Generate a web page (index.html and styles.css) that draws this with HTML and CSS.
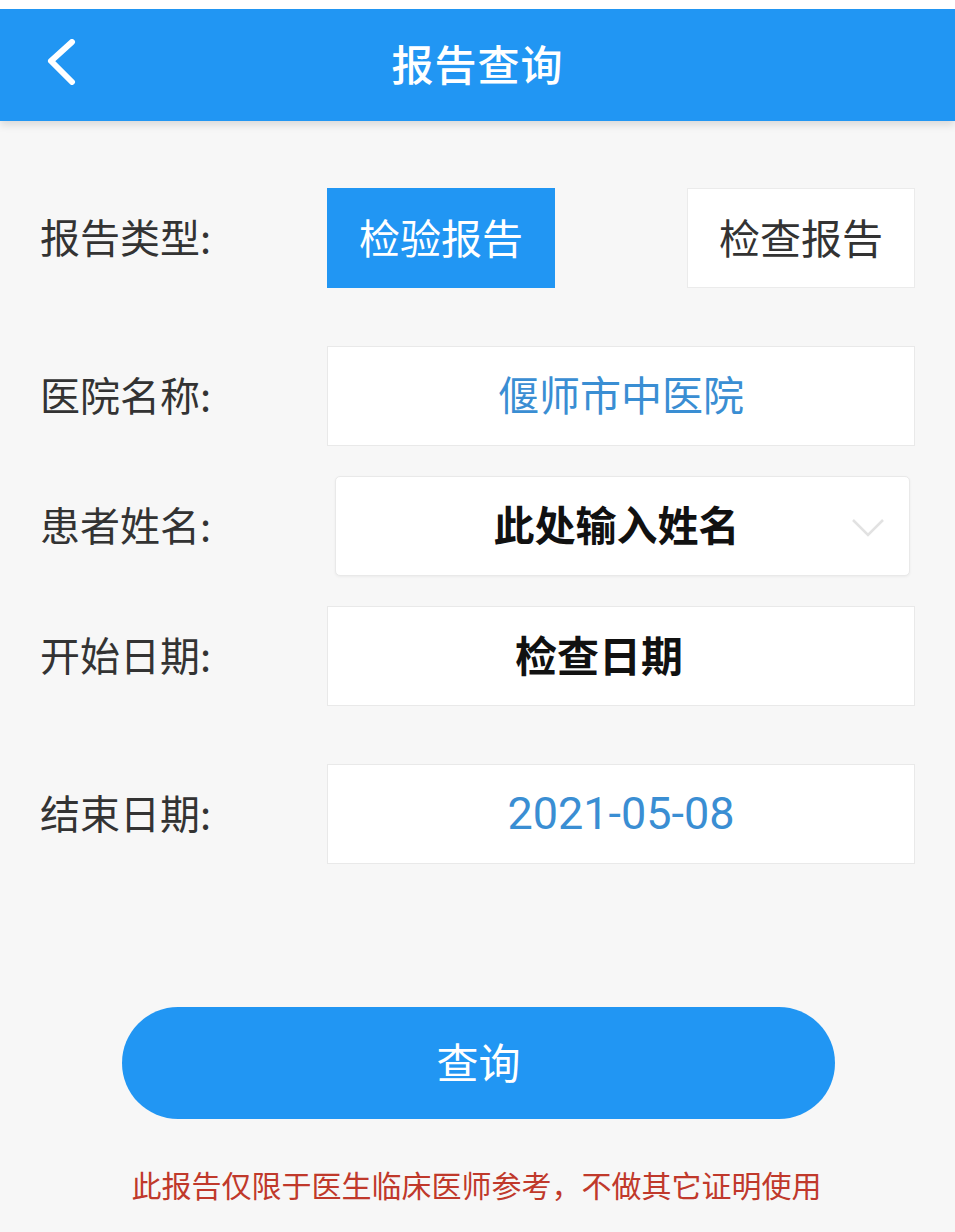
FILE: index.html
```html
<!DOCTYPE html>
<html lang="zh-CN">
<head>
	<meta charset="UTF-8">
	<title>报告查询</title>
	<link rel="stylesheet" href="styles.css">
</head>
<body>
	<div class="topbar">
		<a class="back" href="#">
			<svg width="34" height="46" viewBox="0 0 34 46"><polyline points="28,3 7,22 28,43" fill="none" stroke="#fff" stroke-width="6" stroke-linecap="round" stroke-linejoin="round"/></svg>
		</a>
		<h1>报告查询</h1>
	</div>

	<div class="form">
		<div class="row row-type">
			<span class="label">报告类型:</span>
			<div class="tabs">
				<span class="tab on">检验报告</span>
				<span class="tab">检查报告</span>
			</div>
		</div>
		<div class="row row-hosp">
			<span class="label">医院名称:</span>
			<div class="box blue">偃师市中医院</div>
		</div>
		<div class="row row-name">
			<span class="label">患者姓名:</span>
			<div class="box select bold">
				此处输入姓名
				<svg class="arrow" width="34" height="22" viewBox="0 0 34 22"><polyline points="2,3 17,18 32,3" fill="none" stroke="#e2e2e2" stroke-width="2.5"/></svg>
			</div>
		</div>
		<div class="row row-start">
			<span class="label">开始日期:</span>
			<div class="box bold shift">检查日期</div>
		</div>
		<div class="row row-end">
			<span class="label">结束日期:</span>
			<div class="box blue num">2021-05-08</div>
		</div>
	</div>

	<div class="btn-wrap">
		<a class="btn" href="#">查询</a>
	</div>
	<p class="tip">此报告仅限于医生临床医师参考，不做其它证明使用</p>
</body>
</html>
```

FILE: styles.css
```css
*{margin:0;padding:0;box-sizing:border-box;}
body{
	background: #f7f7f7;
	font-family: "Noto Sans CJK SC", "Liberation Sans", sans-serif;
	color: #333;
	border-top: 9px solid #fff;
	height: 1232px;
	overflow: hidden;
}
.topbar{
	height: 112px;
	background: #2196f3;
	display: flex;
	align-items: center;
	justify-content: center;
	position: relative;
	box-shadow: 0 4px 8px rgba(0,0,0,0.12);
}
.back{
	position: absolute;
	left: 44px;
	top: 30px;
	display: block;
}
.topbar h1{
	color: #fff;
	font-size: 42px;
	font-weight: 500;
	letter-spacing: 1px;
	margin-top: -6px;
}
.form{
	padding: 0 40px;
	margin-top: 67px;
}
.row{
	display: flex;
	align-items: center;
	height: 100px;
}
.label{
	width: 287px;
	font-size: 40px;
	line-height: 1;
	color: #333;
	flex-shrink: 0;
	margin-top: -4px;
}
.row-hosp{margin-top: 58px;}
.row-name{margin-top: 30px;}
.row-start{margin-top: 30px;}
.row-end{margin-top: 58px;}

.tabs{
	flex: 1;
	display: flex;
	justify-content: space-between;
	height: 100%;
}
.tab{
	width: 228px;
	height: 100px;
	display: flex;
	align-items: center;
	justify-content: center;
	font-size: 41px;
	background: #fff;
	border: 1px solid #ebebeb;
	color: #333;
	padding-bottom: 4px;
}
.tab.on{
	background: #2196f3;
	border-color: #2196f3;
	color: #fff;
}
.box{
	flex: 1;
	height: 100px;
	background: #fff;
	border: 1px solid #e9e9e9;
	display: flex;
	align-items: center;
	justify-content: center;
	font-size: 41px;
	position: relative;
	padding-bottom: 6px;
}
.blue{color: #3a8ed3;}
.num{
	font-family: Roboto, "Liberation Sans", sans-serif;
	font-size: 45px;
	padding-bottom: 2px;
}
.bold{
	font-weight: 700;
	color: #111;
}
.select{
	margin-left: 8px;
	margin-right: 5px;
	border-radius: 5px;
	padding-right: 12px;
	box-shadow: 0 1px 3px rgba(0,0,0,0.05);
}
.shift{
	padding-right: 44px;
	font-size: 42px;
}
.arrow{
	position: absolute;
	right: 24px;
	top: 40px;
}
.btn-wrap{
	display: flex;
	justify-content: center;
	margin-top: 143px;
	padding-left: 2px;
}
.btn{
	width: 713px;
	height: 112px;
	border-radius: 56px;
	background: #2196f3;
	color: #fff;
	font-size: 42px;
	text-decoration: none;
	display: flex;
	align-items: center;
	justify-content: center;
	padding-bottom: 6px;
}
.tip{
	margin-top: 45px;
	text-align: center;
	font-size: 30px;
	line-height: 40px;
	color: #c0392b;
	padding-right: 2px;
}
```
